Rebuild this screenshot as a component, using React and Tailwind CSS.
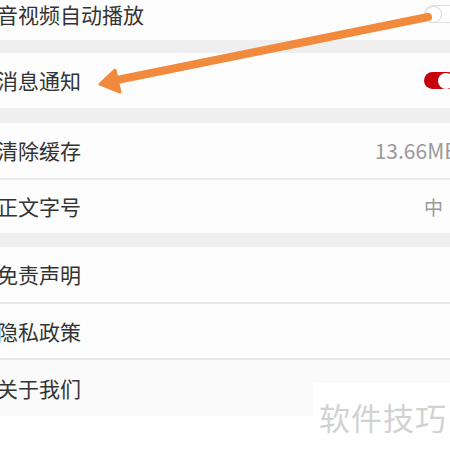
export default function App() {
  const font = { fontFamily: '"Noto Sans CJK SC", "Noto Sans", sans-serif' };
  const Label = ({ children }) => (
    <span className="ml-[-3px] text-[21px] leading-none text-[#333333] whitespace-nowrap">{children}</span>
  );
  return (
    <div className="relative w-[450px] h-[450px] overflow-hidden bg-white" style={font}>
      <div className="flex flex-col">
        <div className="mt-[-12px] h-[52px] bg-[#fdfdfd] flex items-center justify-between">
          <Label>音视频自动播放</Label>
          <div className="mr-[-14px] w-[40px] h-[18px] rounded-full border border-[#e2e2e2] bg-white flex items-center">
            <div className="ml-0 w-[17px] h-[17px] rounded-full bg-white border border-[#d4d4d4]" />
          </div>
        </div>
        <div className="h-[13px] bg-[#efefef]" />
        <div className="h-[55px] bg-[#fdfdfd] flex items-center justify-between">
          <Label>消息通知</Label>
          <div className="mr-[-6px] w-[32px] h-[17px] rounded-full bg-[#c8000c] flex items-center justify-end pr-[2px]">
            <div className="w-[16px] h-[16px] rounded-full bg-white" />
          </div>
        </div>
        <div className="h-[15px] bg-[#efefef]" />
        <div className="h-[55px] bg-[#fdfdfd] flex items-center justify-between">
          <Label>清除缓存</Label>
          <span className="mr-[-8px] text-[21px] leading-none text-[#9a9a9a] whitespace-nowrap">13.66MB</span>
        </div>
        <div className="h-[2px] bg-[#eaeaea]" />
        <div className="h-[53px] bg-[#fdfdfd] flex items-center justify-between">
          <Label>正文字号</Label>
          <span className="mr-[7px] text-[19px] leading-none text-[#9a9a9a]">中</span>
        </div>
        <div className="h-[14px] bg-[#efefef]" />
        <div className="h-[55px] bg-[#fdfdfd] flex items-center">
          <Label>免责声明</Label>
        </div>
        <div className="h-[2px] bg-[#e8e8e8]" />
        <div className="h-[54px] bg-[#fdfdfd] flex items-center">
          <Label>隐私政策</Label>
        </div>
        <div className="h-[2px] bg-[#e8e8e8]" />
        <div className="h-[56px] bg-[#fafafa] flex items-center">
          <Label>关于我们</Label>
        </div>
      </div>

      <svg className="absolute left-0 top-0" width="450" height="450" viewBox="0 0 450 450">
        <line x1="428" y1="17" x2="112" y2="81" stroke="#f18a3c" strokeWidth="8" strokeLinecap="round" />
        <polygon points="100,84 115,70 120,92" fill="#f18a3c" stroke="#f18a3c" strokeWidth="3" strokeLinejoin="round" />
      </svg>

      <div className="absolute left-[313px] top-[383px] w-[137px] h-[67px] bg-white flex items-center pl-[6px]">
        <span className="text-[31px] leading-none text-[#d2d2d2] whitespace-nowrap tracking-[1px]">软件技巧</span>
      </div>
    </div>
  );
}
